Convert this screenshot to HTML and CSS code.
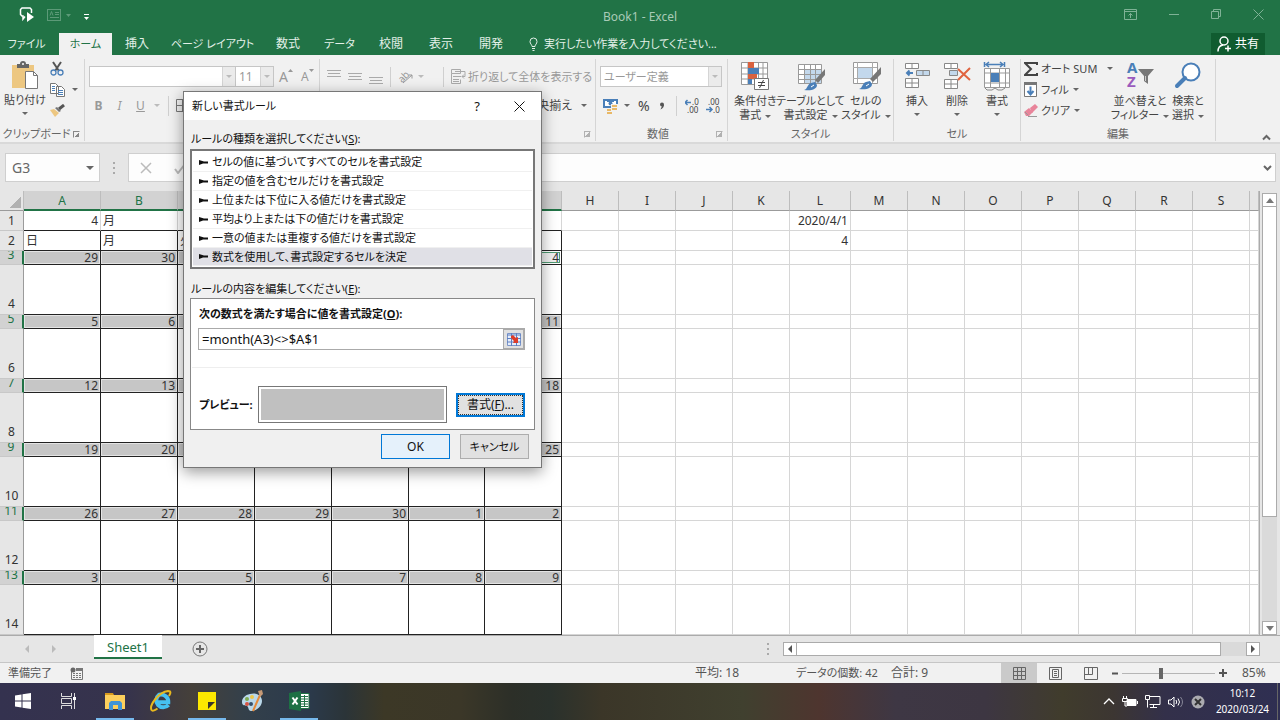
FILE: index.html
```html
<!DOCTYPE html>
<html lang="ja">
<head>
<meta charset="utf-8">
<title>Book1 - Excel</title>
<link rel="stylesheet" href="styles.css">
</head>

<body>
<div class="app">

	<header class="title_bar">
		<div class="quick">
			<button type="button" aria-label="タッチ"><svg width="18" height="18" viewBox="0 0 18 18"><path d="M7 10.500l-2 2.500v-3H4L2.500 8.500v-5L4 2h8l1.500 1.500V7" fill="none" stroke="#fff" stroke-width="1.500"/><path d="M9 6v10l7-5z" fill="#fff"/></svg></button>
			<button type="button" class="quick_form" aria-label="フォーム"><svg width="24" height="14" viewBox="0 0 24 14"><g fill="none" stroke="#5c9a78"><rect x=".5" y="1.500" width="13" height="11"/><path d="M3 7.500l1.500-4L6 7.500M8 4.500h4M8 6.500h4M3 9.500h9"/></g><path d="M19 6h5l-2.500 3z" fill="#5c9a78"/></svg></button>
			<button type="button" class="quick_more" aria-label="カスタマイズ"><svg width="7" height="8" viewBox="0 0 7 8"><path d="M1 1.500h5" stroke="#fff"/><path d="M1 4h5L3.500 7z" fill="#fff"/></svg></button>
		</div>
		<h1>Book1 - Excel</h1>
		<div class="win_btns">
			<button type="button" aria-label="リボンの表示"><svg width="13" height="11" viewBox="0 0 13 11"><path d="M.5.5h12v10H.5zM.5 2.500h12M6.500 9V4.500M4.500 6.500l2-2 2 2" fill="none" stroke="#7fb296"/></svg></button>
			<button type="button" aria-label="最小化"><svg width="10" height="11" viewBox="0 0 10 11"><path d="M0 5.500h10" stroke="#7fb296"/></svg></button>
			<button type="button" aria-label="元に戻す"><svg width="10" height="11" viewBox="0 0 10 11"><path d="M.5 2.500h7v7h-7zM2.500 2.500v-2h7v7h-2" fill="none" stroke="#7fb296"/></svg></button>
			<button type="button" aria-label="閉じる"><svg width="11" height="11" viewBox="0 0 11 11"><path d="M.5.5l10 10M10.500.5l-10 10" fill="none" stroke="#7fb296"/></svg></button>
		</div>
	</header>

	<nav class="tabs">
		<button type="button" class="tab tab_file">ファイル</button>
		<button type="button" class="tab tab_on">ホーム</button>
		<button type="button" class="tab">挿入</button>
		<button type="button" class="tab tab_page">ページ レイアウト</button>
		<button type="button" class="tab">数式</button>
		<button type="button" class="tab tab_data">データ</button>
		<button type="button" class="tab">校閲</button>
		<button type="button" class="tab">表示</button>
		<button type="button" class="tab">開発</button>
		<button type="button" class="tab_tell"><svg width="9" height="14" viewBox="0 0 9 14"><path d="M3 9.500C3 7.500 1 7 1 4.500a3.500 3.500 0 017 0C8 7 6 7.500 6 9.500zM3 11.500h3M3.500 13.500h2" fill="none" stroke="#e3f0e8"/></svg>実行したい作業を入力してください...</button>
		<button type="button" class="share"><svg width="15" height="16" viewBox="0 0 15 16"><circle cx="7" cy="5" r="4" fill="none" stroke="#fff" stroke-width="1.500"/><path d="M1 15.500c0-4 2-6 5-6.500M8 12.500h6M11 9.500v6" fill="none" stroke="#fff" stroke-width="1.500"/></svg>共有</button>
	</nav>

	<section class="ribbon">
		<div class="group g_clip">
			<div class="group_body">
				<button type="button" class="big">
					<svg width="28" height="29" viewBox="0 0 28 29"><path d="M1 4h22v23H1z" fill="#edc781"/><path d="M6 3h3a3 3 0 016 0h3v4H6z" fill="#666"/><circle cx="12" cy="3" r="1" fill="#fff"/><path d="M14.500 10.500h8l4 4v13h-12z" fill="#fff" stroke="#777"/><path d="M22.500 10.500v4h4" fill="none" stroke="#777"/></svg>
					<span>貼り付け</span><i class="caret"></i>
				</button>
				<div class="stack">
					<button type="button" aria-label="切り取り"><svg width="14" height="15" viewBox="0 0 14 15"><path d="M3 1l6 9M11 1L5 10" stroke="#555" stroke-width="2" fill="none"/><circle cx="3.500" cy="11.500" r="2.500" fill="none" stroke="#4a7fb8" stroke-width="1.300"/><circle cx="10.500" cy="11.500" r="2.500" fill="none" stroke="#4a7fb8" stroke-width="1.300"/></svg></button>
					<button type="button" aria-label="コピー"><svg width="15" height="14" viewBox="0 0 15 14"><path d="M.5.5h5l3 3v7h-8zM6.500 3.500h5l3 3v7h-8z" fill="#fff" stroke="#777"/><path d="M2 3.500h3M2 5.500h3M2 7.500h3M8 7.500h5M8 9.500h5M8 11.500h5" stroke="#4a7fb8"/></svg><i class="caret"></i></button>
					<button type="button" aria-label="書式のコピー"><svg width="15" height="13" viewBox="0 0 15 13"><path d="M0 6l4-1 5 4-4 4z" fill="#edc781"/><path d="M5 4l2-1 4 4-2 1z" fill="#777"/><path d="M9 5l5-4" stroke="#555" stroke-width="3"/></svg></button>
				</div>
			</div>
			<div class="group_name"><span>クリップボード</span><i class="launch"></i></div>
		</div>

		<div class="group g_font">
			<div class="row">
				<span class="combo c_font"><select aria-label="フォント"><option></option></select><i class="drop"><i class="caret caret_dim"></i></i></span>
				<span class="combo c_size"><select aria-label="サイズ"><option>11</option></select><i class="drop"><i class="caret caret_dim"></i></i></span>
				<button type="button" class="dim letter">A<svg width="5" height="12" viewBox="0 0 5 12"><path d="M0 3h5L2.500 0z" fill="#999"/></svg></button>
				<button type="button" class="dim letter small">A<svg width="5" height="12" viewBox="0 0 5 12"><path d="M0 0h5L2.500 3z" fill="#999"/></svg></button>
			</div>
			<div class="row row_fmt">
				<button type="button" class="dim"><b>B</b></button>
				<button type="button" class="dim"><em>I</em></button>
				<button type="button" class="dim"><u>U</u></button>
				<i class="caret caret_dim"></i><i class="vline"></i>
				<button type="button" aria-label="罫線"><svg width="13" height="13" viewBox="0 0 13 13"><path d="M.5.5h12v12H.5zM6.500 0v13M0 6.500h13" fill="none" stroke="#777"/></svg></button>
			</div>
			<div class="group_name"><span>フォント</span></div>
		</div>

		<div class="group g_align">
			<div class="row">
				<button type="button" aria-label="上揃え"><svg width="14" height="16" viewBox="0 0 14 16"><path d="M0 1.500h14M1 4.500h12M0 7.500h14" stroke="#aaa"/></svg></button>
				<button type="button" aria-label="中央"><svg width="14" height="16" viewBox="0 0 14 16"><path d="M0 4.500h14M1 7.500h12M0 10.500h14" stroke="#aaa"/></svg></button>
				<button type="button" aria-label="下揃え"><svg width="14" height="16" viewBox="0 0 14 16"><path d="M0 8.500h14M1 11.500h12M0 14.500h14" stroke="#aaa"/></svg></button>
				<i class="vline"></i>
				<button type="button" aria-label="方向"><svg width="16" height="16" viewBox="0 0 16 16"><text x="0" y="11" class="svg_ab" transform="rotate(-45 6 8)">ab</text><path d="M5 14l9-8M10.500 6H14v3.500" fill="none" stroke="#999"/></svg></button>
				<i class="caret caret_dim"></i><i class="vline vline_wrap"></i>
				<button type="button" class="dim wrap_btn"><svg width="15" height="15" viewBox="0 0 15 15"><path d="M.5.5h9v4h-9zM.5 4.500v10h9v-4M2 7.500h8M2 10.500h6M2 12.500h6M4 2.500h10v5h-3M13 5.500l-2 2 2 2" fill="none" stroke="#aaa"/></svg>折り返して全体を表示する</button>
			</div>
			<div class="row row_end"><button type="button">セルを結合して中央揃え</button><i class="caret"></i></div>
			<div class="group_name"><span>配置</span><i class="launch launch_dim"></i></div>
		</div>

		<div class="group g_num">
			<div class="row"><span class="combo c_num"><select aria-label="表示形式"><option>ユーザー定義</option></select><i class="drop"><i class="caret caret_dim"></i></i></span></div>
			<div class="row row_num">
				<button type="button" aria-label="通貨"><svg width="16" height="16" viewBox="0 0 16 16"><path d="M0 1h15v9H0z" fill="#4a7fb8"/><path d="M2 3h2v1h7V3h2v5H2z" fill="#fff"/><circle cx="7.500" cy="5.500" r="2" fill="#4a7fb8"/><path d="M8 6h7v8H9v2H3v-5h5z" fill="#f1f1f1"/><path d="M9 7h5v2H9zM9 10h5v2H9zM4 11h4v2H4zM4 14h5v2H4z" fill="#e9b866"/></svg></button>
				<i class="caret"></i>
				<button type="button" class="pct">%</button>
				<button type="button" class="comma" aria-label="桁区切り"><svg width="6" height="8" viewBox="0 0 6 8"><circle cx="3" cy="2.500" r="2" fill="#555"/><path d="M5 2.500c0 2-1 4-3.500 5L3 4z" fill="#555"/></svg></button>
				<i class="vline"></i>
				<button type="button" aria-label="小数点以下の表示桁数を増やす"><svg width="16" height="16" viewBox="0 0 16 16"><path d="M0 4.500h6M2.500 2L0 4.500 2.500 7" fill="none" stroke="#4a7fb8" stroke-width="1.500"/><text x="7" y="7" class="svg_num">.0</text><text x="2" y="15" class="svg_num">.00</text></svg></button>
				<button type="button" aria-label="小数点以下の表示桁数を減らす"><svg width="16" height="16" viewBox="0 0 16 16"><text x="2" y="7" class="svg_num">.00</text><text x="7" y="15" class="svg_num">.0</text><path d="M0 11.500h6M3.500 9L6 11.500 3.500 14" fill="none" stroke="#4a7fb8" stroke-width="1.500"/></svg></button>
			</div>
			<div class="group_name"><span>数値</span><i class="launch launch_dim"></i></div>
		</div>

		<div class="group g_style">
			<div class="group_body">
				<button type="button" class="big"><svg width="30" height="30" viewBox="0 0 30 30"><path d="M1.500 1.500h26v22h-26zM1.500 7h26M1.500 13h26M1.500 18h26M8 1v22M18.500 1v22M23 1v22" fill="#fff" stroke="#999"/><path d="M8 1h6v6H8zM8 13h9v5H8z" fill="#d9623f"/><path d="M8 7h11v6H8zM8 18h4v5H8z" fill="#4a7fb8"/><path d="M14.500 17.500h14v11h-14z" fill="#fff" stroke="#777"/><path d="M18 21.500h7M18 24.500h7M23.500 19l-4 8" stroke="#444" fill="none"/></svg><span>条件付き<br>書式<i class="caret"></i></span></button>
				<button type="button" class="big"><svg width="30" height="30" viewBox="0 0 30 30"><path d="M2 3h23v19H2z" fill="#fff"/><path d="M8 8h17v14H8z" fill="#c3d8ec"/><path d="M2.500 3.500h23v19h-23zM2 8.500h23M2 13.500h23M2 18.500h23M8.500 3v19M14.500 3v19M19.500 3v19" fill="none" stroke="#999"/><path d="M29 8v6l-7 8-3-3z" fill="#777"/><path d="M8 29c4-1 3-6 7-7l4-1 2 3c0 4-5 6-13 5z" fill="#4a7fb8"/><path d="M15 26l3-2" stroke="#fff"/></svg><span>テーブルとして<br>書式設定<i class="caret"></i></span></button>
				<button type="button" class="big"><svg width="30" height="30" viewBox="0 0 30 30"><path d="M2.500 1.500h24v21h-24z" fill="#fff" stroke="#999"/><path d="M2 6.500h24M2 17.500h24M6.500 1v21M21.500 1v21" stroke="#aaa"/><path d="M7 7h14v10H7z" fill="#c3d8ec"/><path d="M30 6v7l-8 8-3-3z" fill="#777"/><path d="M8 28c4-1 3-6 7-7l4-1 2 3c0 4-5 6-13 5z" fill="#4a7fb8"/><path d="M15 25l3-2" stroke="#fff"/></svg><span>セルの<br>スタイル<i class="caret"></i></span></button>
			</div>
			<div class="group_name"><span>スタイル</span></div>
		</div>

		<div class="group g_cell">
			<div class="group_body">
				<button type="button" class="big"><svg width="27" height="30" viewBox="0 0 27 30"><path d="M1.500 2.500h13v5h-13zM8 2.500v5M1.500 17.500h13v9h-13zM8 17.500v9M1.500 22h13" fill="#fff" stroke="#888"/><path d="M12.500 9.500h13v5h-13zM19 9.500v5" fill="#c3d8ec" stroke="#888"/><path d="M9 12H3M5.500 9.500L3 12l2.500 2.500" fill="none" stroke="#4a7fb8" stroke-width="2"/></svg><span>挿入</span><i class="caret"></i></button>
				<button type="button" class="big"><svg width="28" height="30" viewBox="0 0 28 30"><path d="M1.500 2.500h13v5h-13zM8 2.500v5M1.500 18.500h13v9h-13zM8 18.500v9M1.500 23h13" fill="#fff" stroke="#888"/><path d="M6.500 9.500h8v5h-8z" fill="#c3d8ec" stroke="#888"/><path d="M15 8l12 11M27 7L15 19" fill="none" stroke="#e0633f" stroke-width="2"/></svg><span>削除</span><i class="caret"></i></button>
				<button type="button" class="big"><svg width="28" height="30" viewBox="0 0 28 30"><path d="M1.500 7.500h25v19h-25zM1.500 12h25M1.500 22h25M7.500 7v19M16.500 7v19M22.500 7v19" fill="#fff" stroke="#999"/><path d="M1.500 1v5M21.500 1v5M3 3.500h17M6 1L3 3.500 6 6M17 1l3 2.500L17 6" fill="none" stroke="#4a7fb8" stroke-width="1.500"/><path d="M8 12h8v9H8z" fill="#4a7fb8"/><path d="M2 27l2 2h5l3-2 3 2h4l3-2" fill="none" stroke="#888"/></svg><span>書式</span><i class="caret"></i></button>
			</div>
			<div class="group_name"><span>セル</span></div>
		</div>

		<div class="group g_edit">
			<div class="group_body">
				<div class="stack stack_edit">
					<button type="button"><svg width="14" height="14" viewBox="0 0 14 14"><path d="M13 3V1H1l6 6-6 6h12v-2" fill="none" stroke="#444" stroke-width="2"/></svg>オート SUM<i class="caret caret_sum"></i></button>
					<button type="button"><svg width="14" height="15" viewBox="0 0 14 15"><path d="M.5.5h12v14H.5z" fill="#fff" stroke="#777"/><path d="M0 0h13v3H0z" fill="#777"/><path d="M6.500 4.500v8M3.500 9l3 3.500 3-3.500" fill="none" stroke="#4a7fb8" stroke-width="2"/></svg>フィル<i class="caret"></i></button>
					<button type="button"><svg width="14" height="13" viewBox="0 0 14 13"><path d="M6 4l5-4 3 3-6 6z" fill="#e8849a"/><path d="M0 8l5-4 4 4-4 4H2z" fill="#e8849a"/><path d="M1 8l3 3M4 12.500h9" stroke="#999" fill="none"/></svg>クリア<i class="caret"></i></button>
				</div>
				<button type="button" class="big sort"><svg width="28" height="30" viewBox="0 0 28 30"><text x="1" y="12" class="svg_a">A</text><text x="1" y="26" class="svg_z">Z</text><path d="M12 8h16l-6 7v8l-4-3v-5z" fill="#777"/><path d="M19.500 15v5" stroke="#ccc"/></svg><span>並べ替えと<br>フィルター<i class="caret"></i></span></button>
				<button type="button" class="big"><svg width="28" height="30" viewBox="0 0 28 30"><circle cx="17" cy="11" r="8.500" fill="#fff" stroke="#4a7fb8" stroke-width="2"/><path d="M11 17l-8 8" stroke="#4a7fb8" stroke-width="4" stroke-linecap="round"/></svg><span>検索と<br>選択<i class="caret"></i></span></button>
			</div>
			<div class="group_name"><span>編集</span></div>
		</div>
		<button type="button" class="fold" aria-label="リボンを折りたたむ"><svg width="9" height="7" viewBox="0 0 9 7"><path d="M1 5.500l3.500-3.500L8 5.500" fill="none" stroke="#666" stroke-width="2"/></svg></button>
	</section>

	<section class="formula">
		<div class="name_box"><input type="text" value="G3" aria-label="名前ボックス"><i class="caret caret_big"></i></div>
		<i class="dots"></i>
		<div class="fx_btns">
			<button type="button" aria-label="キャンセル"><svg width="12" height="12" viewBox="0 0 12 12"><path d="M1 1l10 10M11 1L1 11" fill="none" stroke="#bbb" stroke-width="1.500"/></svg></button>
			<button type="button" aria-label="入力"><svg width="12" height="12" viewBox="0 0 12 12"><path d="M1 7l3 4 7-9" fill="none" stroke="#bbb" stroke-width="2"/></svg></button>
		</div>
		<div class="fx_input"><input type="text" aria-label="数式バー"><svg width="9" height="6" viewBox="0 0 9 6"><path d="M1 1l3.500 3.500L8 1" fill="none" stroke="#666" stroke-width="2"/></svg></div>
	</section>

	<main class="sheet">
		<div class="grid_wrap"><table class="grid" id="grid"></table></div>
		<div class="vscroll">
			<button type="button" aria-label="上へ"><svg width="8" height="5" viewBox="0 0 8 5"><path d="M0 5h8L4 0z" fill="#777"/></svg></button>
			<div class="vthumb"></div><div class="vtrack"></div>
			<button type="button" aria-label="下へ"><svg width="8" height="5" viewBox="0 0 8 5"><path d="M0 0h8L4 5z" fill="#777"/></svg></button>
		</div>
	</main>

	<section class="sheet_bar">
		<div class="sheet_nav">
			<button type="button" aria-label="前"><svg width="4" height="8" viewBox="0 0 4 8"><path d="M4 0v8L0 4z" fill="#bbb"/></svg></button>
			<button type="button" aria-label="次"><svg width="4" height="8" viewBox="0 0 4 8"><path d="M0 0v8l4-4z" fill="#bbb"/></svg></button>
		</div>
		<button type="button" class="sheet_tab">Sheet1</button>
		<button type="button" class="sheet_add" aria-label="新しいシート"><svg width="16" height="16" viewBox="0 0 16 16"><circle cx="8" cy="8" r="7" fill="none" stroke="#777"/><path d="M4 8h8M8 4v8" stroke="#666" stroke-width="2"/></svg></button>
		<i class="dots dots_bar"></i>
		<div class="hscroll">
			<button type="button" aria-label="左へ"><svg width="4" height="8" viewBox="0 0 4 8"><path d="M4 0v8L0 4z" fill="#555"/></svg></button>
			<div class="hthumb"></div><div class="htrack"></div>
			<button type="button" aria-label="右へ"><svg width="4" height="8" viewBox="0 0 4 8"><path d="M0 0v8l4-4z" fill="#555"/></svg></button>
		</div>
	</section>

	<footer class="status">
		<span class="ready">準備完了</span>
		<svg class="macro" width="13" height="13" viewBox="0 0 13 13"><path d="M1.500 5v7.500h11v-11H6" fill="none" stroke="#777"/><path d="M6 1h7v3H6z" fill="#777"/><circle cx="3" cy="3" r="2.500" fill="#666"/><path d="M3 6.500h8M3 8.500h8M3 10.500h8" stroke="#777" stroke-dasharray="2 1"/></svg>
		<span class="avg">平均: 18</span>
		<span class="count">データの個数: 42</span>
		<span class="sum">合計: 9</span>
		<div class="views">
			<button type="button" class="view_on" aria-label="標準"><svg width="13" height="13" viewBox="0 0 13 13"><path d="M.5.5h12v12H.5zM4.500 0v13M8.500 0v13M0 4.500h13M0 8.500h13" fill="none" stroke="#666"/></svg></button>
			<button type="button" aria-label="ページ レイアウト"><svg width="13" height="13" viewBox="0 0 13 13"><path d="M.5.5h12v12H.5zM3.500 2.500h6v8h-6zM5 4.500h3M5 6.500h3M5 8.500h3" fill="none" stroke="#666"/></svg></button>
			<button type="button" aria-label="改ページ"><svg width="14" height="13" viewBox="0 0 14 13"><path d="M.5.5h13v12H.5zM4.500 0v7.500M8.500 0v7.500H0" fill="none" stroke="#666"/></svg></button>
		</div>
		<button type="button" aria-label="縮小"><svg width="7" height="7" viewBox="0 0 7 7"><path d="M0 3.500h6" stroke="#555" stroke-width="2"/></svg></button>
		<input class="zoom" type="range" min="10" max="190" value="85" aria-label="ズーム">
		<button type="button" aria-label="拡大"><svg width="8" height="8" viewBox="0 0 8 8"><path d="M0 4h8M4 0v8" stroke="#555" stroke-width="2"/></svg></button>
		<span class="pct_now">85%</span>
	</footer>

	<footer class="taskbar">
		<div class="tasks">
			<button type="button" aria-label="スタート"><svg width="16" height="16" viewBox="0 0 16 16"><path d="M0 2.500l6.500-1v6H0zM7.500 1.300L16 0v7.500H7.500zM0 8.500h6.500v6L0 13.500zM7.500 8.500H16V16l-8.500-1.300z" fill="#fff"/></svg></button>
			<button type="button" aria-label="タスク ビュー"><svg width="16" height="16" viewBox="0 0 16 16"><path d="M.5 0v3.500h10V0M.5 5.500h10v5H.5zM.5 16v-3.500h10V16M13.500 0v16" fill="none" stroke="#ddd"/><path d="M12 4h3v3h-3z" fill="#fff"/></svg></button>
			<button type="button" class="running" aria-label="エクスプローラー"><svg width="20" height="18" viewBox="0 0 20 18"><path d="M0 1h8l1 2H0z" fill="#d89a1d"/><path d="M0 3h20v14H0z" fill="#fccf5c"/><path d="M4 18v-7l2-2h9l2 2v7h-4v-5H8v5z" fill="#3f94d8"/></svg></button>
			<button type="button" aria-label="Internet Explorer"><svg width="22" height="22" viewBox="0 0 22 22"><path d="M18.500 15A7 7 0 119 4.800c5-1 9.500 2 9.300 7.400H7" fill="none" stroke="#46c1f0" stroke-width="4"/><path d="M1.500 20C-1 15 9 2 18 1c4 0 2 3 1 5M1.500 20c1 1.500 4 0 6-1.500" fill="none" stroke="#e8b91e" stroke-width="2"/></svg></button>
			<button type="button" class="running" aria-label="付箋"><svg width="18" height="18" viewBox="0 0 18 18"><path d="M0 0h18v18H0z" fill="#fde800"/><path d="M10 17v-7h7z" fill="#38362a"/></svg></button>
			<button type="button" aria-label="ペイント"><svg width="22" height="22" viewBox="0 0 22 22"><path d="M8 4c7-2 12 2 12 7s-5 10-11 10c-3 0-2-4-4-5S0 16 0 12s3-7 8-8z" fill="#bad8ea"/><circle cx="5" cy="14" r="2" fill="#d65444"/><circle cx="5" cy="9" r="2" fill="#7dab50"/><circle cx="10" cy="7" r="2" fill="#edc84b"/><circle cx="9" cy="14" r="2" fill="#35506b"/><path d="M18 5l-7 16" stroke="#e58a3b" stroke-width="2"/><path d="M16 1l4-1 1 4-3 3z" fill="#c79a76"/></svg></button>
			<button type="button" class="running" aria-label="Excel"><svg width="21" height="20" viewBox="0 0 21 20"><path d="M10 2.500h10v15H10z" fill="#fff" stroke="#217346"/><path d="M12 5.500h7M12 8h7M12 10.500h7M12 13h7M12 15.500h7M15.500 4v12" stroke="#217346"/><path d="M0 2l12-2v20L0 18z" fill="#1d7044"/><path d="M3.500 6.500l5 7M8.500 6.500l-5 7" stroke="#fff" stroke-width="2"/></svg></button>
		</div>
		<div class="tray">
			<svg width="12" height="7" viewBox="0 0 12 7"><path d="M1 6l5-5 5 5" fill="none" stroke="#fff" stroke-width="1.300"/></svg>
			<svg width="16" height="12" viewBox="0 0 16 12"><path d="M5 3.500h9v6H5z" fill="#fff" stroke="#fff"/><path d="M15.500 5v3M1.500 0v2M4.500 0v2M.5 2.500h5v3h-5zM3 5.500V10h2" fill="none" stroke="#fff"/></svg>
			<svg width="16" height="13" viewBox="0 0 16 13"><path d="M5 1.500h10v8H4.500M5 12.500h7M8.500 9.500v3M.5.5h4v4h-4zM2.500 4.500v8" fill="none" stroke="#fff"/></svg>
			<svg width="16" height="12" viewBox="0 0 16 12"><path d="M.5 4v4h2.500l3 3V1L3 4zM8 4q1.500 2 0 4M10 2.500q3 3.500 0 7" fill="none" stroke="#fff"/><path d="M12.500 1q4 5 0 10" fill="none" stroke="#889"/></svg>
			<svg width="14" height="14" viewBox="0 0 14 14"><circle cx="7" cy="7" r="6.500" fill="#ababb0"/><path d="M4 4l6 6M10 4l-6 6" stroke="#333" stroke-width="2"/></svg>
		</div>
		<div class="clock"><time>10:12</time><time>2020/03/24</time></div>
	</footer>

	<!-- 新しい書式ルール -->
	<form class="dialog">
		<div class="dlg_title">
			<span>新しい書式ルール</span>
			<button type="button">?</button>
			<button type="button" aria-label="閉じる"><svg width="11" height="11" viewBox="0 0 11 11"><path d="M.5.5l10 10M10.500.5l-10 10" fill="none" stroke="#111"/></svg></button>
		</div>
		<div class="dlg_body">
			<p class="dlg_label" id="kindLabel">ルールの種類を選択してください(<u>S</u>):</p>
			<ul class="rules" role="listbox" aria-labelledby="kindLabel" id="rules">
				<li role="option">セルの値に基づいてすべてのセルを書式設定</li>
				<li role="option">指定の値を含むセルだけを書式設定</li>
				<li role="option">上位または下位に入る値だけを書式設定</li>
				<li role="option">平均より上または下の値だけを書式設定</li>
				<li role="option">一意の値または重複する値だけを書式設定</li>
				<li role="option" class="rule_on" aria-selected="true">数式を使用して、書式設定するセルを決定</li>
			</ul>
			<p class="dlg_label">ルールの内容を編集してください(<u>E</u>):</p>
			<div class="detail">
				<label for="cond">次の数式を満たす場合に値を書式設定(<u>O</u>):</label>
				<div class="cond_box">
					<input id="cond" type="text" value="=month(A3)&lt;&gt;$A$1">
					<button type="button" aria-label="範囲選択"><svg width="14" height="13" viewBox="0 0 14 13"><path d="M.5.5h13v12H.5z" fill="#e6eefb" stroke="#7b95c9"/><path d="M0 2h14M0 5.500h14M0 9h14M4.500 0v13M9.500 0v13" stroke="#5c7fc2"/><path d="M4 3l2-1 3 3 2-1v6H6l1-2-3-3z" fill="#dd3c2a"/></svg></button>
				</div>
				<hr>
				<div class="preview">
					<span>プレビュー:</span>
					<div class="sample"></div>
					<button type="button" class="fmt_btn">書式(<u>F</u>)...</button>
				</div>
			</div>
			<div class="dlg_btns">
				<button type="submit" class="ok">OK</button>
				<button type="button">キャンセル</button>
			</div>
		</div>
	</form>
</div>
<script src="script.js"></script>
</body>
</html>
```

FILE: styles.css
```css
* { box-sizing:border-box; }
body {
	margin:0;
	font:12px/14px "Noto Sans", "Noto Sans CJK JP", sans-serif;
	font-feature-settings:"palt";
	color:#444;
}
button, input, select {
	margin:0;
	padding:0;
	border:0;
	background:none;
	font:inherit;
	font-feature-settings:inherit;
	color:inherit;
}
button { white-space:nowrap; }
svg { display:block; flex:none; }
.app {
	position:relative;
	display:flex;
	flex-direction:column;
	height:100vh;
	overflow:hidden;
	background:#e6e6e6;
}

/* タイトルバー */
.title_bar {
	display:grid;
	grid-template-columns:1fr auto 1fr;
	align-items:center;
	height:33px;
	background:#217346;
}
.title_bar h1 { margin:0; font-size:12px; font-weight:normal; color:#a8cbb7; }
.quick { display:flex; align-items:center; padding-left:18px; padding-bottom:4px; }
.quick_form { margin-left:11px; }
.quick_more { margin-left:12px; padding-top:4px; }
.win_btns { display:flex; justify-content:flex-end; align-items:center; gap:32px; padding-right:16px; padding-bottom:4px; }

/* タブ */
.tabs { display:flex; height:22px; background:#217346; color:#e3f0e8; }
.tab { width:50px; }
.tab_file { width:59px; padding-right:6px; font-size:11px; }
.tab_on { width:53px; background:#f1f1f1; color:#217346; font-size:11px; }
.tab_page { width:101px; font-size:11px; }
.tab_data { width:53px; font-size:11px; }
.tab_tell { display:flex; align-items:center; gap:6px; padding-left:13px; font-size:11px; }
.share {
	display:flex;
	align-items:center;
	gap:3px;
	margin-left:auto;
	margin-right:15px;
	padding:0 6px;
	background:#105c30;
	color:#fff;
}

/* リボン */
.ribbon {
	display:flex;
	flex:none;
	height:89px;
	padding:4px 0 1px;
	background:#f1f1f1;
	border-bottom:2px solid #d9d9d9;
	font-size:11px;
}
.group {
	display:flex;
	flex-direction:column;
	flex:none;
	border-right:1px solid #d5d5d5;
}
.group_body { display:flex; justify-content:center; flex:1; }
.group_name {
	display:flex;
	align-items:flex-end;
	margin-top:auto;
	line-height:14px;
	color:#666;
	white-space:nowrap;
}
.group_name span { flex:1; text-align:center; }
.launch {
	width:7px;
	height:7px;
	margin:0 4px 3px 0;
	border:1px solid #888;
	border-right-color:transparent;
	border-bottom-color:transparent;
	background:linear-gradient(135deg, transparent 50%, #888 50%) right bottom / 5px 5px no-repeat;
}
.launch_dim { opacity:.6; }
.g_clip { width:85px; }
.g_font { width:235px; padding-left:4px; }
.g_align { width:276px; padding-left:7px; }
.g_num { width:132px; padding-left:4px; }
.g_style { width:166px; }
.g_cell { width:127px; }
.g_edit { width:195px; }
.big {
	display:flex;
	flex-direction:column;
	align-items:center;
	padding-top:2px;
	line-height:14px;
}
.big > svg { margin-bottom:3px; }
.big > .caret { margin-top:5px; }
.g_clip .big { width:50px; }
.g_style .big { width:56px; }
.g_cell .big { width:40px; }
.g_edit .big { width:48px; }
.caret {
	display:inline-block;
	flex:none;
	width:5px;
	border:solid transparent;
	border-width:3px 3px 0;
	border-top-color:#666;
	vertical-align:middle;
}
span > .caret { margin-left:4px; }
.caret_dim { border-top-color:#bbb; }
.caret_big { width:8px; border-width:4px 4px 0; }
.stack { display:flex; flex-direction:column; gap:6px; width:34px; padding-top:2px; }
.stack button { display:flex; align-items:center; height:15px; gap:7px; }
.stack_edit { width:92px; }
.stack_edit button { gap:3px; }
.stack_edit .caret { margin-left:1px; }
.stack_edit .caret_sum { margin-left:7px; }
.row { display:flex; align-items:center; height:21px; margin-top:7px; }
.row + .row { margin-top:8px; }
.row_fmt { gap:12px; padding-left:5px; font-size:12px; }
.row_fmt button { width:9px; }
.row_fmt svg { margin-left:-5px; }
.row_fmt .caret { margin-left:-3px; }
.row_fmt .vline { margin-left:-4px; }
.row_end { justify-content:flex-end; gap:9px; padding-right:8px; font-size:12px; }
.dim { color:#999; }
.combo { display:flex; height:21px; border:1px solid #c6c6c6; background:#fff; color:#999; }
.combo select { flex:1; min-width:0; padding-left:3px; appearance:none; }
.drop { display:flex; align-items:center; justify-content:center; width:13px; background:#ebebeb; border-left:1px solid #d5d5d5; }
.c_font { width:147px; }
.c_size { width:39px; margin-left:-1px; font-size:12px; }
.c_num { width:122px; }
.letter { display:flex; margin-left:5px; font-size:14px; line-height:15px; }
.small { margin-left:8px; font-size:12px; }
.vline { width:1px; height:20px; background:#d0d0d0; }
.g_align .row:first-child { gap:7px; }
.g_align .row .caret_dim { margin-left:-3px; }
.vline_wrap { margin-left:12px; }
.wrap_btn { display:flex; align-items:center; gap:2px; }
.row_num { gap:5px; padding-left:3px; }
.row_num .caret { margin-right:3px; }
.pct { font-size:14px; margin-right:4px; }
.comma { margin-right:6px; }
.row_num .vline { margin-right:3px; }
.svg_ab { font-size:10px; fill:#999; }
.svg_num { font-size:8px; fill:#444; }
.svg_a { font-size:15px; font-weight:bold; fill:#4a7fb8; }
.svg_z { font-size:15px; font-weight:bold; fill:#9a5bbd; }
.fold { display:flex; align-items:flex-end; margin-left:auto; padding:0 9px 0 0; }

/* 数式バー */
.formula { display:flex; flex:none; height:47px; padding:9px 4px 9px 5px; }
.name_box, .fx_btns, .fx_input { display:flex; align-items:center; background:#fdfdfd; border:1px solid #cfcfcf; }
.name_box { width:95px; padding:0 5px 0 6px; }
.name_box input { flex:1; min-width:0; font-size:14px; line-height:20px; color:#666; }
.dots { width:2px; height:12px; margin:9px 13px 0; background:repeating-linear-gradient(#aaa 0 2px, transparent 2px 5px); }
.fx_btns { width:100px; gap:22px; padding-left:11px; }
.fx_input { flex:1; margin-left:3px; padding-right:3px; }
.fx_input input { flex:1; }

/* シート */
.sheet { display:flex; flex:1; min-height:0; border-bottom:1px solid #ababab; }
.grid_wrap { flex:1; min-width:0; overflow:hidden; background:#fff; border-right:1px solid #ababab; }
.grid { width:100%; table-layout:fixed; border-collapse:separate; border-spacing:0; line-height:13px; color:#333; }
.grid th { padding:0; font-weight:normal; background:#e6e6e6; border-right:1px solid #bdbdbd; border-bottom:1px solid #bdbdbd; }
.grid thead th { height:20px; border-bottom-color:#9b9b9b; }
.grid thead .col_on { background:#d2d2d2; color:#217346; border-bottom:2px solid #217346; }
.grid thead .corner { background:linear-gradient(135deg, transparent 50%, #b1b1b1 50%) 9px 5px / 12px 12px no-repeat #e6e6e6; }
.grid tbody th { vertical-align:bottom; border-right-color:#9b9b9b; border-bottom-color:#c8c8c8; }
.grid td { padding:0 2px; border-right:1px solid #d6d6d6; border-bottom:1px solid #d6d6d6; white-space:nowrap; }
.grid .num { text-align:right; }
.r_head td, .r_head th { height:20px; }
.grid .r_head th { padding-bottom:3px; }
.r_date td, .r_date th { height:14px; }
.r_memo td, .r_memo th { height:50px; }
.grid .r_memo th { padding-bottom:4px; }
.grid .under { border-bottom-color:#222; }
.grid .cal { border-right-color:#222; border-bottom-color:#222; }
.r_date .cal { background:#c6c6c6; box-shadow:inset 0 0 0 1px #e4e4e4; }
.r_date .cal_active { background:#f0f0f0; box-shadow:inset 0 0 0 1px #fff, inset 0 0 0 2px #4f9a72; }
.grid .r_date th { background:#d2d2d2; color:#217346; border-right:2px solid #217346; vertical-align:top; }
.r_date th div { height:13px; overflow:hidden; line-height:8px; }
.vscroll { display:flex; flex-direction:column; width:20px; padding:2px 3px 0 2px; background:#e6e6e6; }
.vscroll button { display:flex; align-items:center; justify-content:center; height:14px; background:#fff; border:1px solid #ababab; }
.vthumb { flex:310; background:#fff; border:1px solid #ababab; border-top:0; }
.vtrack { flex:105; background:#dadada; }

/* シート見出し */
.sheet_bar { display:flex; flex:none; height:26px; padding-right:20px; }
.sheet_nav { display:flex; gap:23px; width:94px; padding-left:25px; }
.sheet_tab {
	width:68px;
	margin-top:-1px;
	padding-top:2px;
	background:#fff;
	border-bottom:2px solid #217346;
	height:24px;
	font-size:13px;
	color:#217346;
}
.sheet_add { margin-left:30px; }
.dots_bar { margin:7px 14px 0 auto; }
.hscroll { display:flex; width:477px; height:14px; margin-top:6px; }
.hscroll button { display:flex; align-items:center; justify-content:center; width:14px; background:#fff; border:1px solid #ababab; }
.hthumb { flex:424; background:#fff; border:1px solid #ababab; border-left:0; }
.htrack { flex:25; background:#dadada; }

/* ステータスバー */
.status {
	display:flex;
	align-items:center;
	flex:none;
	height:21px;
	padding-right:14px;
	padding-left:8px;
	background:#f1f1f1;
	border-top:1px solid #c6c6c6;
	color:#555;
}
.ready { font-size:11px; }
.macro { margin-left:18px; }
.avg { width:101px; margin-left:auto; }
.count { width:95px; font-size:11px; }
.sum { width:110px; }
.views { display:flex; align-self:stretch; width:111px; }
.views button { display:flex; align-items:center; justify-content:center; width:36px; }
.views .view_on { background:#cacaca; }
.zoom { width:93px; height:14px; margin:0 4px 0 3px; appearance:none; background:linear-gradient(#b5b5b5, #b5b5b5) center / 100% 1px no-repeat; }
.zoom::-webkit-slider-thumb { appearance:none; width:4px; height:11px; background:#666; }
.pct_now { width:24px; margin-left:15px; }

/* タスクバー */
.taskbar {
	display:flex;
	flex:none;
	height:37px;
	background:linear-gradient(90deg, #34324f 0, #36334c 10%, #45403a 15%, #34404a 19%, #2b3a4c 24%, #2b3438 27%, #3c3826 30%, #3b3728 36%, #2c2f28 40%, #2a312c 43%, #3b3628 47%, #40402f 58%, #4e352f 64%, #3e3744 70%, #3d3642 77%, #403c2c 83%, #3c3632 87%, #33304a 91%, #2f2f52 100%);
	color:#fff;
}
.tasks { display:flex; }
.tasks button { display:flex; align-items:center; justify-content:center; width:38px; margin:0 4px; border-bottom:2px solid transparent; }
.tasks .running { border-bottom-color:#76b9ed; }
.tray { display:flex; align-items:center; gap:7px; margin-left:auto; margin-right:3px; }
.clock { display:flex; flex-direction:column; justify-content:center; width:70px; margin-right:2px; padding-bottom:2px; border-right:1px solid #666; text-align:center; font-size:10px; line-height:16px; }

/* ダイアログ */
.dialog {
	position:absolute;
	left:183px;
	top:91px;
	width:359px;
	background:#f0f0f0;
	border:1px solid #777;
	box-shadow:0 4px 14px rgba(0, 0, 0, .4);
	color:#111;
	font-size:11px;
}
.dlg_title { display:flex; align-items:center; height:28px; padding:0 16px 0 8px; background:#fff; }
.dlg_title span { flex:1; }
.dlg_title button { font-size:13px; }
.dlg_title button:last-child { margin-left:34px; }
.dlg_body { padding:10px 6px 8px; }
.dlg_label { margin:0; padding:0 1px; line-height:18px; }
.rules { margin:1px 0 11px; padding:2px 1px 1px; list-style:none; background:#fff; border:2px solid #777; }
.rules li { display:flex; align-items:center; gap:4px; height:19px; padding-left:6px; border-bottom:1px solid #f0f0f0; }
.rules .rule_on { background:#e0e0e6; height:18px; }
.detail { padding:6px 9px 6px 7px; background:#fff; border:1px solid #888; }
.detail label, .preview span { font-weight:bold; }
.detail label { display:block; line-height:18px; padding-left:1px; }
.cond_box { display:flex; height:22px; margin-top:5px; border:1px solid #aaa; }
.cond_box input { flex:1; padding-left:3px; font-size:13px; }
.cond_box button { display:flex; align-items:center; justify-content:center; width:21px; background:#e1e1e1; border:1px solid #aaa; }
.detail hr { height:1px; margin:17px -7px 18px -6px; background:#eee; border:0; }
.preview { display:flex; align-items:center; padding-left:1px; }
.preview span { width:59px; }
.sample { flex:1; height:37px; margin-right:9px; padding:2px; border:1px solid #777; background:#c0c0c0 content-box; }
.dialog .fmt_btn { width:69px; height:24px; font-size:12px; background:#e1e1e1; border:2px solid #0078d7; outline:1px dotted #333; outline-offset:-3px; }
.dlg_btns { display:flex; justify-content:flex-end; gap:10px; padding:4px 6px 0 0; }
.dlg_btns button { width:69px; height:25px; background:#e1e1e1; border:1px solid #adadad; }
.dlg_btns .ok { background:#e5f1fb; border-color:#0078d7; font-size:12px; }
```

FILE: script.js
```js
(function() {
	var cols = [77, 77, 77, 77, 77, 76, 77, 57, 57, 57, 57, 61, 57, 57, 57, 57, 57, 57, 57];
	var names = "ABCDEFGHIJKLMNOPQRS".split("");
	var rows = [
		["r_head", [4, "月"]],
		["r_head", ["日", "月", "火", "水", "木", "金", "土"]],
		["r_date", [29, 30, 31, 1, 2, 3, 4]],
		["r_memo", []],
		["r_date", [5, 6, 7, 8, 9, 10, 11]],
		["r_memo", []],
		["r_date", [12, 13, 14, 15, 16, 17, 18]],
		["r_memo", []],
		["r_date", [19, 20, 21, 22, 23, 24, 25]],
		["r_memo", []],
		["r_date", [26, 27, 28, 29, 30, 1, 2]],
		["r_memo", []],
		["r_date", [3, 4, 5, 6, 7, 8, 9]],
		["r_memo", []]
	];
	// L列の基準日と月
	rows[0][1][11] = "2020/4/1";
	rows[1][1][11] = 4;

	var html = '<colgroup><col style="width:24px">';
	cols.forEach(function(w) {
		html += '<col style="width:' + w + 'px">';
	});
	html += '<col></colgroup><thead><tr><th class="corner"></th>';
	names.forEach(function(n, i) {
		html += '<th' + (i < 7 ? ' class="col_on"' : '') + '>' + n + '</th>';
	});
	html += '<th></th></tr></thead><tbody>';

	rows.forEach(function(row, r) {
		html += '<tr class="' + row[0] + '"><th><div>' + (r + 1) + '</div></th>';
		for (var c = 0; c < 20; c++) {
			var v = row[1][c], cls = [];
			if (c < 7) cls.push(r === 0 ? "under" : "cal");
			if (r === 2 && c === 6) cls.push("cal_active");
			if (typeof v === "number" || c === 11) cls.push("num");
			html += '<td class="' + cls.join(" ") + '">' + (v === undefined ? "" : v) + '</td>';
		}
		html += '</tr>';
	});
	document.getElementById("grid").innerHTML = html + '</tbody>';

	// 一覧の行頭記号
	var items = document.querySelectorAll("#rules li");
	for (var i = 0; i < items.length; i++) {
		items[i].insertAdjacentHTML("afterbegin", '<svg width="9" height="5" viewBox="0 0 9 5"><path d="M0 0l5 1.500h4v2H4L0 5z" fill="#111"/></svg>');
	}
})();
```
